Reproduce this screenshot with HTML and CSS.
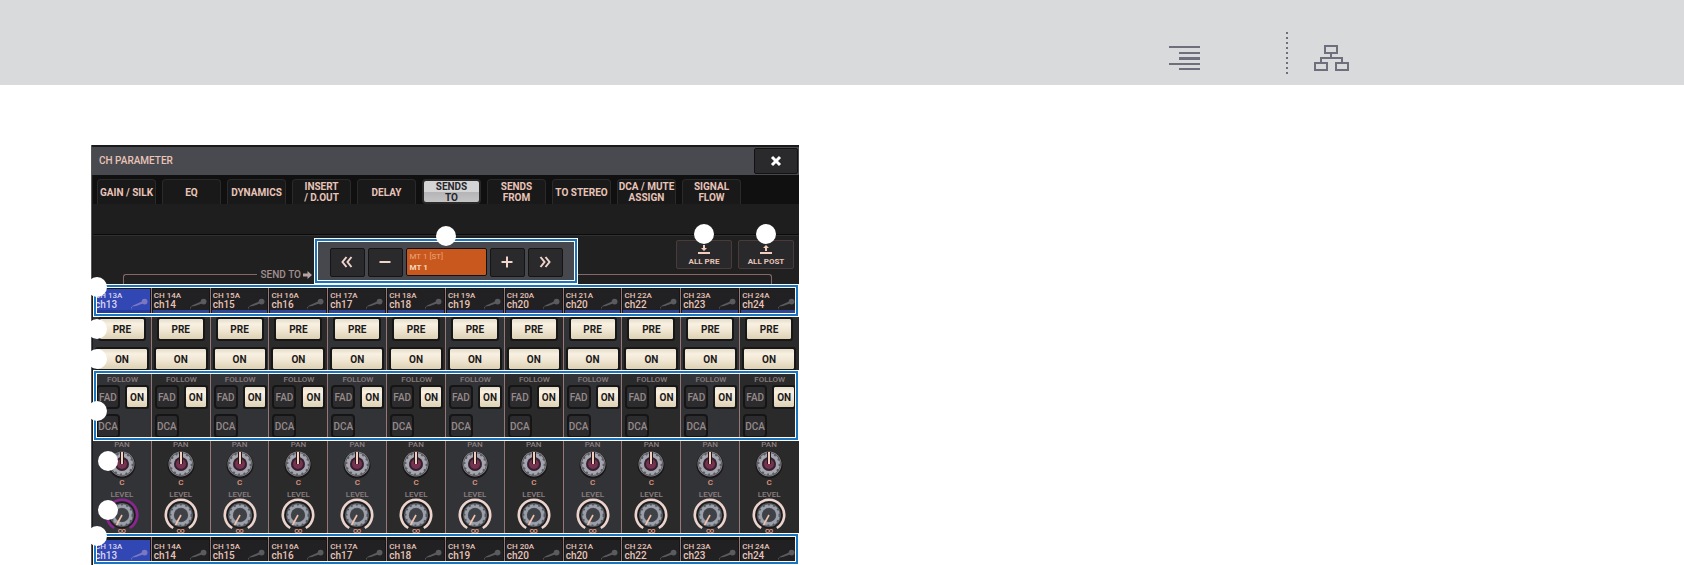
FILE: index.html
```html
<!DOCTYPE html>
<html lang="en">
<head>
  <meta charset="UTF-8">
  <meta name="viewport" content="width=device-width, initial-scale=1.0">
  <title>CH PARAMETER - SENDS TO</title>
  <link rel="stylesheet" href="styles.css">
</head>
<body>
  <!-- Shared symbols -->
  <svg class="symbols" aria-hidden="true">
    <symbol id="mic" viewBox="0 0 18 13">
      <path d="M2 12 L1 9.5 L3 7.5 L12 3.5 L13 5.5 L6 8 L2.5 8.6 L1.8 10 Z" fill="currentColor"/>
      <circle cx="14.6" cy="3.6" r="2.9" fill="currentColor"/>
    </symbol>
    <symbol id="pan-knob" viewBox="0 0 36 28">
      <circle cx="18" cy="15" r="13.5" fill="#18181a"/>
      <circle cx="18" cy="14" r="12.5" fill="#8c8484"/>
      <circle cx="18" cy="14" r="11.6" fill="#4c4b51"/>
      <circle cx="18" cy="14" r="9" fill="none" stroke="#a3a6b0" stroke-width="4"/>
      <circle cx="18" cy="14" r="10.6" fill="none" stroke="#5a5c66" stroke-width="2" stroke-dasharray="2 3.5"/>
      <circle cx="18" cy="14" r="6.8" fill="#3b1e2b"/>
      <circle cx="18" cy="14" r="5" fill="#743350"/>
      <path d="M18 2 V14" stroke="#20181a" stroke-width="4"/>
      <path d="M18 2 V14" stroke="#f3cdbd" stroke-width="2"/>
    </symbol>
    <symbol id="level-knob" viewBox="0 0 36 34">
      <circle cx="18" cy="18" r="13.5" fill="#1a1b1d"/>
      <path d="M10.2 31 A15.2 15.2 0 1 1 25.8 31" fill="none" stroke="currentColor" stroke-width="2.6"/>
      <circle cx="18" cy="18" r="12" fill="#55575d"/>
      <circle cx="18" cy="18" r="9" fill="none" stroke="#9b9fa9" stroke-width="3.6"/>
      <circle cx="18" cy="18" r="10.8" fill="none" stroke="#55575f" stroke-width="2.4" stroke-dasharray="2 3.5"/>
      <circle cx="18" cy="18" r="6.8" fill="#3e4246"/>
      <path d="M18 18 L12.5 28" stroke="#f3c3b0" stroke-width="1.6"/>
    </symbol>
  </svg>

  <header class="page-header">
    <nav class="page-nav">
      <a class="nav-link" href="#contents" aria-label="Contents">
        <svg width="31" height="27" viewBox="0 0 31 27" fill="none" stroke="#6e6e7d" stroke-width="2">
          <path d="M0 3H31M10 9H31M0 20H31M10 25H31"/>
          <path d="M10 14.5H31" stroke-width="3"/>
        </svg>
      </a>
      <span class="nav-divider"></span>
      <a class="nav-link" href="#tree" aria-label="Block diagram">
        <svg width="36" height="28" viewBox="0 0 36 28" fill="none" stroke="#6e6e7d" stroke-width="2">
          <path d="M12 2H24V9H12ZM18 9V14M8 19V14H29V19" />
          <path d="M2 19H14V26H2ZM23 19H35V26H23Z"/>
        </svg>
      </a>
    </nav>
  </header>

  <main class="page">
    <section class="panel">
      <div class="titlebar">
        <h1>CH PARAMETER</h1>
        <button class="close-btn" type="button" aria-label="Close">
          <svg width="12" height="12" viewBox="0 0 12 12"><path d="M2 2L10 10M10 2L2 10" stroke="#fff" stroke-width="3"/></svg>
        </button>
      </div>

      <div class="tabs">
        <button class="tab" type="button">GAIN / SILK</button>
        <button class="tab" type="button">EQ</button>
        <button class="tab" type="button">DYNAMICS</button>
        <button class="tab" type="button">INSERT<br>/ D.OUT</button>
        <button class="tab" type="button">DELAY</button>
        <button class="tab active" type="button">SENDS<br>TO</button>
        <button class="tab" type="button">SENDS<br>FROM</button>
        <button class="tab" type="button">TO STEREO</button>
        <button class="tab" type="button">DCA / MUTE<br>ASSIGN</button>
        <button class="tab" type="button">SIGNAL<br>FLOW</button>
      </div>
      <div class="tab-band"></div>

      <div class="toolbar">
        <div class="send-line left">
          <div class="send-label">SEND TO
            <svg width="9" height="8" viewBox="0 0 9 8"><path d="M0 2.5H4.5V0L9 4L4.5 8V5.5H0Z" fill="#b5a3a3"/></svg>
          </div>
        </div>
        <div class="bus-select framed">
          <i class="marker top"></i>
          <button class="step" type="button" aria-label="First bus">
            <svg width="14" height="12" viewBox="0 0 14 12"><path d="M6.5 1L2.5 6L6.5 11M11.5 1L7.5 6L11.5 11"/></svg>
          </button>
          <button class="step" type="button" aria-label="Previous bus">
            <svg width="14" height="12" viewBox="0 0 14 12"><path d="M1.5 6H12.5"/></svg>
          </button>
          <div class="bus-name"><small>MT 1 [ST]</small><b>MT 1</b></div>
          <button class="step" type="button" aria-label="Next bus">
            <svg width="14" height="12" viewBox="0 0 14 12"><path d="M1.5 6H12.5M7 0.5V11.5"/></svg>
          </button>
          <button class="step" type="button" aria-label="Last bus">
            <svg width="14" height="12" viewBox="0 0 14 12"><path d="M2.5 1L6.5 6L2.5 11M7.5 1L11.5 6L7.5 11"/></svg>
          </button>
        </div>
        <div class="send-line right"></div>
        <div class="all-buttons">
          <button class="all-btn" type="button"><i class="marker top"></i>
            <svg width="14" height="10" viewBox="0 0 14 10"><path d="M6 0H8V3H10L7 6L4 3H6ZM1 7H13V9H1Z" fill="#f3cdbd"/></svg>
            ALL PRE
          </button>
          <button class="all-btn" type="button"><i class="marker top"></i>
            <svg width="14" height="10" viewBox="0 0 14 10"><path d="M6 6H8V3H10L7 0L4 3H6ZM1 7H13V9H1Z" fill="#f3cdbd"/></svg>
            ALL POST
          </button>
        </div>
      </div>

      <div class="row names framed" data-row="name"><i class="marker side"></i></div>
      <div class="row pre" data-row="pre"><i class="marker side"></i></div>
      <div class="row on" data-row="on"><i class="marker side"></i></div>
      <div class="row follow framed" data-row="follow"><i class="marker side"></i></div>
      <div class="row pan" data-row="pan"><i class="marker inner"></i></div>
      <div class="row level" data-row="level"><i class="marker inner"></i></div>
      <div class="row names bottom framed" data-row="name"><i class="marker side"></i></div>
    </section>
  </main>

  <script src="script.js"></script>
</body>
</html>
```
FILE: styles.css
```css
* {
  box-sizing: border-box;
}
body {
  margin: 0;
  background: #fff;
  font-family: Roboto, "Liberation Sans", Arial, sans-serif;
  color: #e8c4b8;
}
button {
  margin: 0;
  padding: 0;
  font-family: inherit;
  color: inherit;
  cursor: pointer;
}
svg {
  display: block;
}
.symbols {
  display: none;
}

/* Header */
.page-header {
  display: flex;
  justify-content: flex-end;
  height: 85px;
  padding: 32px 335px 0 0;
  background: #d9dadc;
}
.page-nav {
  display: flex;
}
.nav-link {
  margin-top: 12px;
}
.nav-divider {
  width: 2px;
  height: 45px;
  margin: 0 25px 0 86px;
  background: repeating-linear-gradient(#6e6e7d 0 2px, transparent 2px 5px);
}

/* Panel */
.page {
  padding: 60px 91px 0;
}
.panel {
  width: 100%;
  max-width: 708px;
  padding-left: 1px;
  background: #1b1b1c;
  border-left: 1px solid #56575b;
}
.titlebar {
  display: flex;
  align-items: center;
  justify-content: space-between;
  height: 30px;
  margin-left: -1px;
  padding: 0 1px 0 7px;
  background: #494a4f;
  border-top: 2px solid #1a1a1b;
}
.titlebar h1 {
  margin: 0;
  font-size: 10px;
  font-weight: 500;
  line-height: 14px;
}
.close-btn {
  display: grid;
  place-items: center;
  width: 44px;
  height: 26px;
  background: #2a2a2d;
  border: 1px solid #121213;
  border-radius: 2px;
}
.tabs {
  display: grid;
  grid-template-columns: repeat(10, 59px);
  gap: 6px;
  padding: 4px 0 0 4px;
  background: #101011;
}
.tab {
  height: 25px;
  background: #19191a;
  border: 1px solid #2a2a2b;
  border-bottom: 0;
  border-radius: 4px 4px 0 0;
  font-size: 10px;
  font-weight: bold;
  line-height: 11px;
  white-space: nowrap;
}
.tab.active {
  background: linear-gradient(#d5d5d6 50%, #b4b4b6 50%, #c4c4c5);
  border: 2px solid #2a2a2b;
  border-radius: 4px;
  color: #26262b;
}
.tab-band {
  height: 31px;
  background: #1e1e1f;
  border-bottom: 1px solid #0b0b0b;
}

/* Toolbar */
.toolbar {
  display: flex;
  height: 49px;
  padding: 4px 5px 0 30px;
  background: #202021;
  border-top: 1px solid #303031;
}
.send-line {
  height: 11px;
  margin-top: 34px;
  border-top: 1px solid #86686a;
}
.send-line.left {
  width: 191px;
  border-left: 1px solid #86686a;
  border-radius: 3px 0 0 0;
}
.send-label {
  display: flex;
  align-items: center;
  gap: 2px;
  width: max-content;
  margin: -7px 0 0 auto;
  padding: 0 2px 0 4px;
  background: #202021;
  color: #a08f8f;
  font-size: 10px;
  font-weight: 500;
  line-height: 14px;
}
.send-line.right {
  flex: 1;
  margin-right: -24px;
  border-right: 1px solid #86686a;
  border-radius: 0 3px 0 0;
}
.framed {
  position: relative;
}
.framed::after {
  content: "";
  position: absolute;
  inset: 1px;
  border: 2px solid #1b75bc;
  outline: 1px solid #fff;
  box-shadow: inset 0 0 0 1px #fff;
  pointer-events: none;
}
.bus-select {
  display: flex;
  align-items: center;
  justify-content: center;
  gap: 3px;
  width: 264px;
  height: 46px;
  margin-top: -2px;
  padding-top: 2px;
  background: #47484d;
}
.step {
  display: grid;
  place-items: center;
  width: 35px;
  height: 29px;
  background: #2a2a2d;
  border: 1px solid #151516;
  border-radius: 2px;
}
.step path {
  fill: none;
  stroke: #f0d5ca;
  stroke-width: 2;
}
.bus-name {
  display: flex;
  flex-direction: column;
  justify-content: center;
  width: 81px;
  height: 28px;
  padding-left: 3px;
  background: #c9581e;
  border: 1px solid #111;
  border-radius: 2px;
  color: #f6d8bd;
}
.bus-name small {
  color: #eaa77c;
  font-size: 8px;
  line-height: 11px;
}
.bus-name b {
  font-size: 8px;
  line-height: 11px;
}
.all-buttons {
  display: flex;
  gap: 6px;
  margin-left: -72px;
}
.all-btn {
  position: relative;
  display: flex;
  flex-direction: column;
  align-items: center;
  gap: 2px;
  width: 56px;
  height: 29px;
  padding-top: 4px;
  background: #29292b;
  border: 1px solid #4a3b3b;
  border-radius: 2px;
  font-size: 8px;
  font-weight: bold;
  line-height: 10px;
  white-space: nowrap;
}

/* White callout discs */
.marker {
  position: absolute;
  z-index: 2;
  width: 20px;
  height: 20px;
  border-radius: 50%;
  background: #fff;
}
.marker.top {
  top: -12px;
  left: 50%;
  margin-left: -10px;
}
.all-btn .marker.top {
  top: -17px;
}
.marker.side {
  top: 2px;
  left: -6px;
}
.marker.inner {
  top: 10px;
  left: 5px;
}
.names .marker.side {
  top: -7px;
}
.follow .marker.side {
  top: 31px;
}

/* Channel rows */
.row {
  position: relative;
  display: grid;
  grid-template-columns: repeat(12, 1fr);
}
.cell {
  border-right: 1px solid #967876;
  background: #2a2a2b;
}
.cell:nth-of-type(odd) {
  background: #323337;
}
.cell:last-child {
  border-right-color: #2a2a2b;
}
.names {
  height: 33px;
}
.names .cell {
  padding: 5px 1px 3px;
  background: #161617;
}
.name-tag {
  position: relative;
  height: 24px;
  padding: 3px 1px 0;
  background: #212123;
  border-bottom: 3px solid #2f4696;
}
.name-tag small {
  display: block;
  font-size: 8px;
  font-weight: 500;
  line-height: 8px;
}
.name-tag b {
  display: block;
  font-size: 10px;
  font-weight: 500;
  line-height: 10px;
}
.name-tag svg {
  position: absolute;
  right: 2px;
  bottom: -1px;
  width: 18px;
  height: 13px;
  color: #5a5b5f;
}
.name-tag.selected {
  background: #3147b4;
  border-color: #263b9c;
  color: #dcd3ef;
}
.name-tag.selected svg {
  color: #7c78c0;
}
.names.bottom {
  height: 32px;
}
.names.bottom .cell {
  padding-top: 7px;
}
.names.bottom .name-tag {
  height: 22px;
  border-bottom-width: 1px;
}
.lit {
  background: linear-gradient(#e5dcc9, #f8f0e2 25%, #eee4d0 60%, #ddd0b4);
  background-clip: padding-box;
  border: 2px solid #171718;
  border-radius: 3px;
  color: #1c1a1a;
  font-size: 10px;
  font-weight: bold;
  line-height: 13px;
}
.pre .cell,
.on .cell {
  display: flex;
  justify-content: center;
}
.pre .cell {
  height: 30px;
}
.pre .lit {
  width: 48px;
  height: 24px;
}
.on .cell {
  height: 23px;
}
.on .lit {
  width: 54px;
  height: 24px;
}
.follow .cell {
  display: grid;
  grid-template-columns: 24px 24px;
  grid-template-rows: 10px 24px 24px;
  align-content: start;
  column-gap: 5px;
  height: 71px;
  padding: 5px 0 0 3px;
}
.caption {
  color: #8c7e80;
  font-size: 8px;
  font-weight: 500;
  line-height: 10px;
  text-align: center;
}
.follow .caption {
  grid-column: 1 / 3;
}
.follow button {
  height: 24px;
}
.dark {
  background: #2c2c2f;
  border: 2px solid #151516;
  border-radius: 4px;
  color: #968a8a;
  font-size: 10px;
  font-weight: 500;
}
.follow .dark:last-child {
  margin-top: 5px;
}
.knob {
  width: 36px;
  height: 28px;
  margin: 0 auto;
}
.value {
  color: #e39a83;
  font-size: 8px;
  font-weight: 500;
  line-height: 8px;
  text-align: center;
}
.pan .cell {
  height: 49px;
}
.pan .knob {
  height: 30px;
}
.pan .caption {
  line-height: 8px;
}
.level .cell {
  height: 43px;
}
.level .knob {
  height: 34px;
  margin-top: -3px;
  margin-bottom: -4px;
  color: #ecd3cb;
}
.level .knob.selected {
  color: #8b2590;
}
```
FILE: script.js
```js
const channels = [
  ['CH 13A', 'ch13'], ['CH 14A', 'ch14'], ['CH 15A', 'ch15'], ['CH 16A', 'ch16'],
  ['CH 17A', 'ch17'], ['CH 18A', 'ch18'], ['CH 19A', 'ch19'], ['CH 20A', 'ch20'],
  ['CH 21A', 'ch20'], ['CH 22A', 'ch22'], ['CH 23A', 'ch23'], ['CH 24A', 'ch24']
];

const templates = {
  name: (ch, sel) => `<div class="name-tag ${sel}"><small>${ch[0]}</small><b>${ch[1]}</b><svg><use href="#mic"/></svg></div>`,
  pre: () => '<button class="lit" type="button">PRE</button>',
  on: () => '<button class="lit" type="button">ON</button>',
  follow: () => `<div class="caption">FOLLOW</div>
    <button class="dark" type="button">FAD</button>
    <button class="lit" type="button">ON</button>
    <button class="dark" type="button">DCA</button>`,
  pan: () => '<div class="caption">PAN</div><svg class="knob"><use href="#pan-knob"/></svg><div class="value">C</div>',
  level: (ch, sel) => `<div class="caption">LEVEL</div><svg class="knob ${sel}"><use href="#level-knob"/></svg><div class="value">∞</div>`
};

document.querySelectorAll('.row').forEach(row => {
  channels.forEach((ch, i) => {
    const cell = document.createElement('div');
    cell.className = 'cell';
    cell.innerHTML = templates[row.dataset.row](ch, i === 0 ? 'selected' : '');
    row.appendChild(cell);
  });
});
```
